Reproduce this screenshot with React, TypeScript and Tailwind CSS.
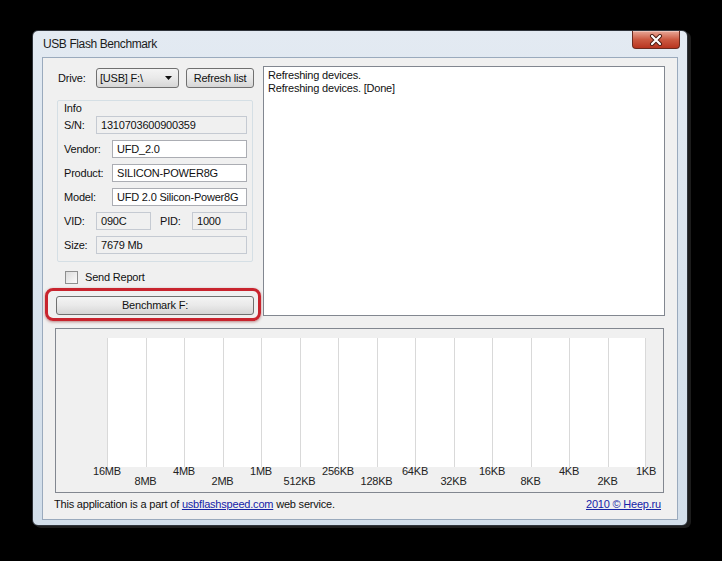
import React from 'react'

const sizes = ['16MB', '8MB', '4MB', '2MB', '1MB', '512KB', '256KB', '128KB', '64KB', '32KB', '16KB', '8KB', '4KB', '2KB', '1KB']

function CloseButton() {
  return (
    <div className="-mr-[2px] w-[48px] h-[18px] rounded-b-[4px] border border-t-0 border-[#6b2a1e] bg-gradient-to-b from-[#e8a898] via-[#cc5a42] to-[#b8341f] flex items-center justify-center shadow-[inset_0_1px_0_rgba(255,255,255,0.35)]">
      <svg width="14" height="12" viewBox="0 0 14 12">
        <path d="M3 2 L11 10 M11 2 L3 10" stroke="#4a1a10" strokeWidth="4" strokeLinecap="round" />
        <path d="M3 2 L11 10 M11 2 L3 10" stroke="#ffffff" strokeWidth="2.2" strokeLinecap="round" />
      </svg>
    </div>
  )
}

function Field({ value, width, readOnly }: { value: string; width: string; readOnly?: boolean }) {
  return (
    <div
      className={`${width} h-[18px] border leading-[16px] pl-[4px] whitespace-nowrap overflow-hidden ${
        readOnly ? 'bg-[#f0f0f0] border-[#c5cad2]' : 'bg-white border-[#abadb3]'
      }`}
    >
      {value}
    </div>
  )
}

export default function App() {
  return (
    <div className="w-[722px] h-[561px] bg-black pt-[30px] pl-[32px] font-['Liberation_Sans',Arial,sans-serif] text-[11px] leading-[13px] tracking-[-0.2px] text-[#111]">
      <div className="w-[656px] h-[496px] rounded-[6px] border border-[#2e333a] bg-gradient-to-b from-[#e3eaf2] via-[#d9e3ed] to-[#d2deea] shadow-[3px_2px_0_#1c1c1c] flex flex-col px-[9px] pb-[5px]">
        {/* title bar */}
        <div className="h-[26px] flex items-start justify-between">
          <span className="mt-[7px] ml-[1px] text-[12px] tracking-[-0.4px] text-[#1b1b1b]">USB Flash Benchmark</span>
          <CloseButton />
        </div>

        {/* client area */}
        <div className="flex-1 border border-[#9aaabd] bg-[#f0f0f0] flex flex-col">
          <div className="flex pl-[13px] pt-[8px]">
            {/* left panel */}
            <div className="w-[207px] flex flex-col">
              <div className="mt-[2px] h-[20px] flex items-center">
                <span className="ml-[2px] w-[38px]">Drive:</span>
                <div className="w-[83px] h-[20px] rounded-[3px] border border-[#707070] bg-gradient-to-b from-[#f4f4f4] via-[#e9e9e9] to-[#d6d6d6] flex items-center justify-between pl-[3px] pr-[6px]">
                  <span>[USB] F:\</span>
                  <svg width="7" height="4" viewBox="0 0 7 4">
                    <path d="M0 0 H7 L3.5 4 Z" fill="#111" />
                  </svg>
                </div>
                <div className="ml-[7px] w-[68px] h-[20px] rounded-[3px] border border-[#707070] bg-gradient-to-b from-[#f4f4f4] via-[#e9e9e9] to-[#d6d6d6] flex items-center justify-center">
                  Refresh list
                </div>
              </div>

              {/* info group */}
              <div className="mt-[12px] ml-[1px] w-[196px] h-[162px] border border-[#d5dfe5] rounded-[2px] pl-[6px] pr-[5px] pt-[1px] flex flex-col">
                <span>Info</span>
                <div className="mt-[1px] flex flex-col gap-[6px]">
                  <div className="flex items-center">
                    <span className="w-[32px]">S/N:</span>
                    <Field value="1310703600900359" width="w-[151px]" readOnly />
                  </div>
                  <div className="flex items-center">
                    <span className="w-[48px]">Vendor:</span>
                    <Field value="UFD_2.0" width="w-[135px]" />
                  </div>
                  <div className="flex items-center">
                    <span className="w-[48px]">Product:</span>
                    <Field value="SILICON-POWER8G" width="w-[135px]" />
                  </div>
                  <div className="flex items-center">
                    <span className="w-[48px]">Model:</span>
                    <Field value="UFD 2.0 Silicon-Power8G" width="w-[135px]" />
                  </div>
                  <div className="flex items-center">
                    <span className="w-[32px]">VID:</span>
                    <Field value="090C" width="w-[55px]" readOnly />
                    <span className="ml-[9px] w-[32px]">PID:</span>
                    <Field value="1000" width="w-[55px]" readOnly />
                  </div>
                  <div className="flex items-center">
                    <span className="w-[32px]">Size:</span>
                    <Field value="7679 Mb" width="w-[151px]" readOnly />
                  </div>
                </div>
              </div>

              <div className="mt-[9px] ml-[9px] flex items-center">
                <div className="w-[13px] h-[13px] border border-[#8e8f8f] bg-gradient-to-br from-[#dcdcdc] to-[#fbfbfb]" />
                <span className="ml-[7px]">Send Report</span>
              </div>

              <div className="relative mt-[12px] w-[198px] h-[19px]">
                <div className="w-full h-full rounded-[3px] border border-[#707070] bg-gradient-to-b from-[#f4f4f4] via-[#e9e9e9] to-[#d6d6d6] flex items-center justify-center">
                  Benchmark F:
                </div>
                <div className="absolute -left-[11px] -right-[7px] -top-[8px] -bottom-[6px] rounded-[8px] border-[3px] border-[#c8242e] shadow-[0_1px_3px_rgba(120,0,0,0.45)]" />
              </div>
            </div>

            {/* log */}
            <div className="w-[402px] h-[250px] border border-[#828790] bg-white pl-[4px] pt-[2px]">
              <div>Refreshing devices.</div>
              <div>Refreshing devices. [Done]</div>
            </div>
          </div>

          {/* graph */}
          <div className="mt-[12px] ml-[12px] w-[609px] h-[165px] border border-[#828790] bg-[#f0f0f0] pl-[51px] pt-[9px] flex flex-col">
            <div className="flex h-[129px]">
              {sizes.slice(1).map((s, i) => (
                <div
                  key={s}
                  className={`w-[38.5px] h-full shrink-0 bg-white border-l border-[#d9d9d9] ${i === 13 ? 'border-r' : ''}`}
                />
              ))}
            </div>
            <div className="-ml-[19.25px] -mt-[2px] flex items-start">
              {sizes.map((s, i) => (
                <span
                  key={s}
                  className={`w-[38.5px] shrink-0 text-center text-[#222] ${i % 2 === 1 ? 'mt-[10px]' : ''}`}
                >
                  {s}
                </span>
              ))}
            </div>
          </div>

          {/* footer */}
          <div className="mt-[5px] pl-[11px] pr-[16px] flex justify-between">
            <span>
              This application is a part of{' '}
              <span className="text-[#1523a8] underline">usbflashspeed.com</span> web service.
            </span>
            <span className="text-[#1523a8] underline">2010 © Heep.ru</span>
          </div>
        </div>
      </div>
    </div>
  )
}
